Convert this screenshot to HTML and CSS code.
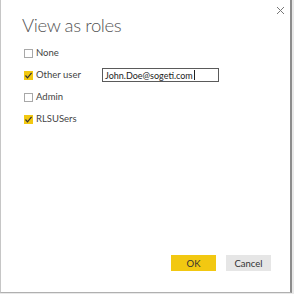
FILE: index.html
```html
<!DOCTYPE html>
<html>
<head>
<meta charset="utf-8">
<link rel="stylesheet" href="styles.css">
</head>
<body>
<div class="dialog">
  <button class="close" aria-label="Close">
    <svg width="9" height="9" viewBox="0 0 9 9"><path d="M1 1L8 8M8 1L1 8" stroke="#777" stroke-width="1" fill="none"/></svg>
  </button>
  <h1 class="title">View as roles</h1>
  <div class="roles">
    <div class="row">
      <label class="check"><span class="box"></span><span class="label">None</span></label>
    </div>
    <div class="row">
      <label class="check"><span class="box checked"><svg width="9" height="9" viewBox="0 0 9 9"><path d="M1.5 4.5L3.5 6.8L7.6 1.8" stroke="#333" stroke-width="1.2" fill="none"/></svg></span><span class="label">Other user</span></label>
      <div class="input"><span>John.Doe@sogeti.com</span><span class="caret"></span></div>
    </div>
    <div class="row">
      <label class="check"><span class="box"></span><span class="label">Admin</span></label>
    </div>
    <div class="row">
      <label class="check"><span class="box checked"><svg width="9" height="9" viewBox="0 0 9 9"><path d="M1.5 4.5L3.5 6.8L7.6 1.8" stroke="#333" stroke-width="1.2" fill="none"/></svg></span><span class="label">RLSUSers</span></label>
    </div>
  </div>
  <div class="actions">
    <button class="btn primary">OK</button>
    <button class="btn">Cancel</button>
  </div>
</div>
</body>
</html>
```
FILE: styles.css
```css
html, body {
  margin: 0;
  padding: 0;
}
body {
  width: 294px;
  height: 294px;
  background: #e8e8e8;
  font-family: Lato, "Open Sans", sans-serif;
  color: #333;
}
.dialog {
  position: relative;
  box-sizing: border-box;
  width: 292px;
  height: 293px;
  background: #fff;
  border-left: 1px solid #c6c6c6;
  border-right: 2px solid #8c8c8c;
  border-bottom: 1px solid #b0b0b0;
  display: flex;
  flex-direction: column;
  padding: 14px 19px 21px 21px;
}
.close {
  position: absolute;
  top: 5px;
  right: 4px;
  width: 11px;
  height: 11px;
  padding: 1px;
  border: 0;
  background: none;
  display: flex;
}
.title {
  margin: 0;
  font-size: 18.5px;
  font-weight: 300;
  letter-spacing: -0.4px;
  line-height: 22px;
  color: #555;
}
.roles {
  margin-top: 6px;
  display: flex;
  flex-direction: column;
  padding-left: 2px;
}
.row {
  height: 22px;
  display: grid;
  grid-template-columns: 78px 117px;
  align-items: center;
}
.check {
  display: flex;
  align-items: center;
  gap: 3px;
}
.box {
  box-sizing: border-box;
  width: 9px;
  height: 9px;
  border: 1px solid #a8a8a8;
  background: #fff;
  display: flex;
}
.box.checked {
  border: 0;
  background: #f2c811;
}
.label {
  font-size: 9.5px;
  line-height: 12px;
  color: #444;
}
.input {
  box-sizing: border-box;
  height: 14px;
  border: 1px solid #5a5a5a;
  display: flex;
  align-items: center;
  padding-left: 2px;
  font-size: 9px;
  color: #222;
}
.caret {
  width: 1px;
  height: 10px;
  background: #222;
  margin-left: 1px;
}
.actions {
  margin-top: auto;
  display: flex;
  justify-content: flex-end;
  gap: 10px;
}
.btn {
  width: 45px;
  height: 16px;
  border: 0;
  padding: 0;
  font-family: inherit;
  font-size: 9.5px;
  color: #333;
  background: #e6e6e6;
}
.btn.primary {
  background: #f2c811;
}
```
